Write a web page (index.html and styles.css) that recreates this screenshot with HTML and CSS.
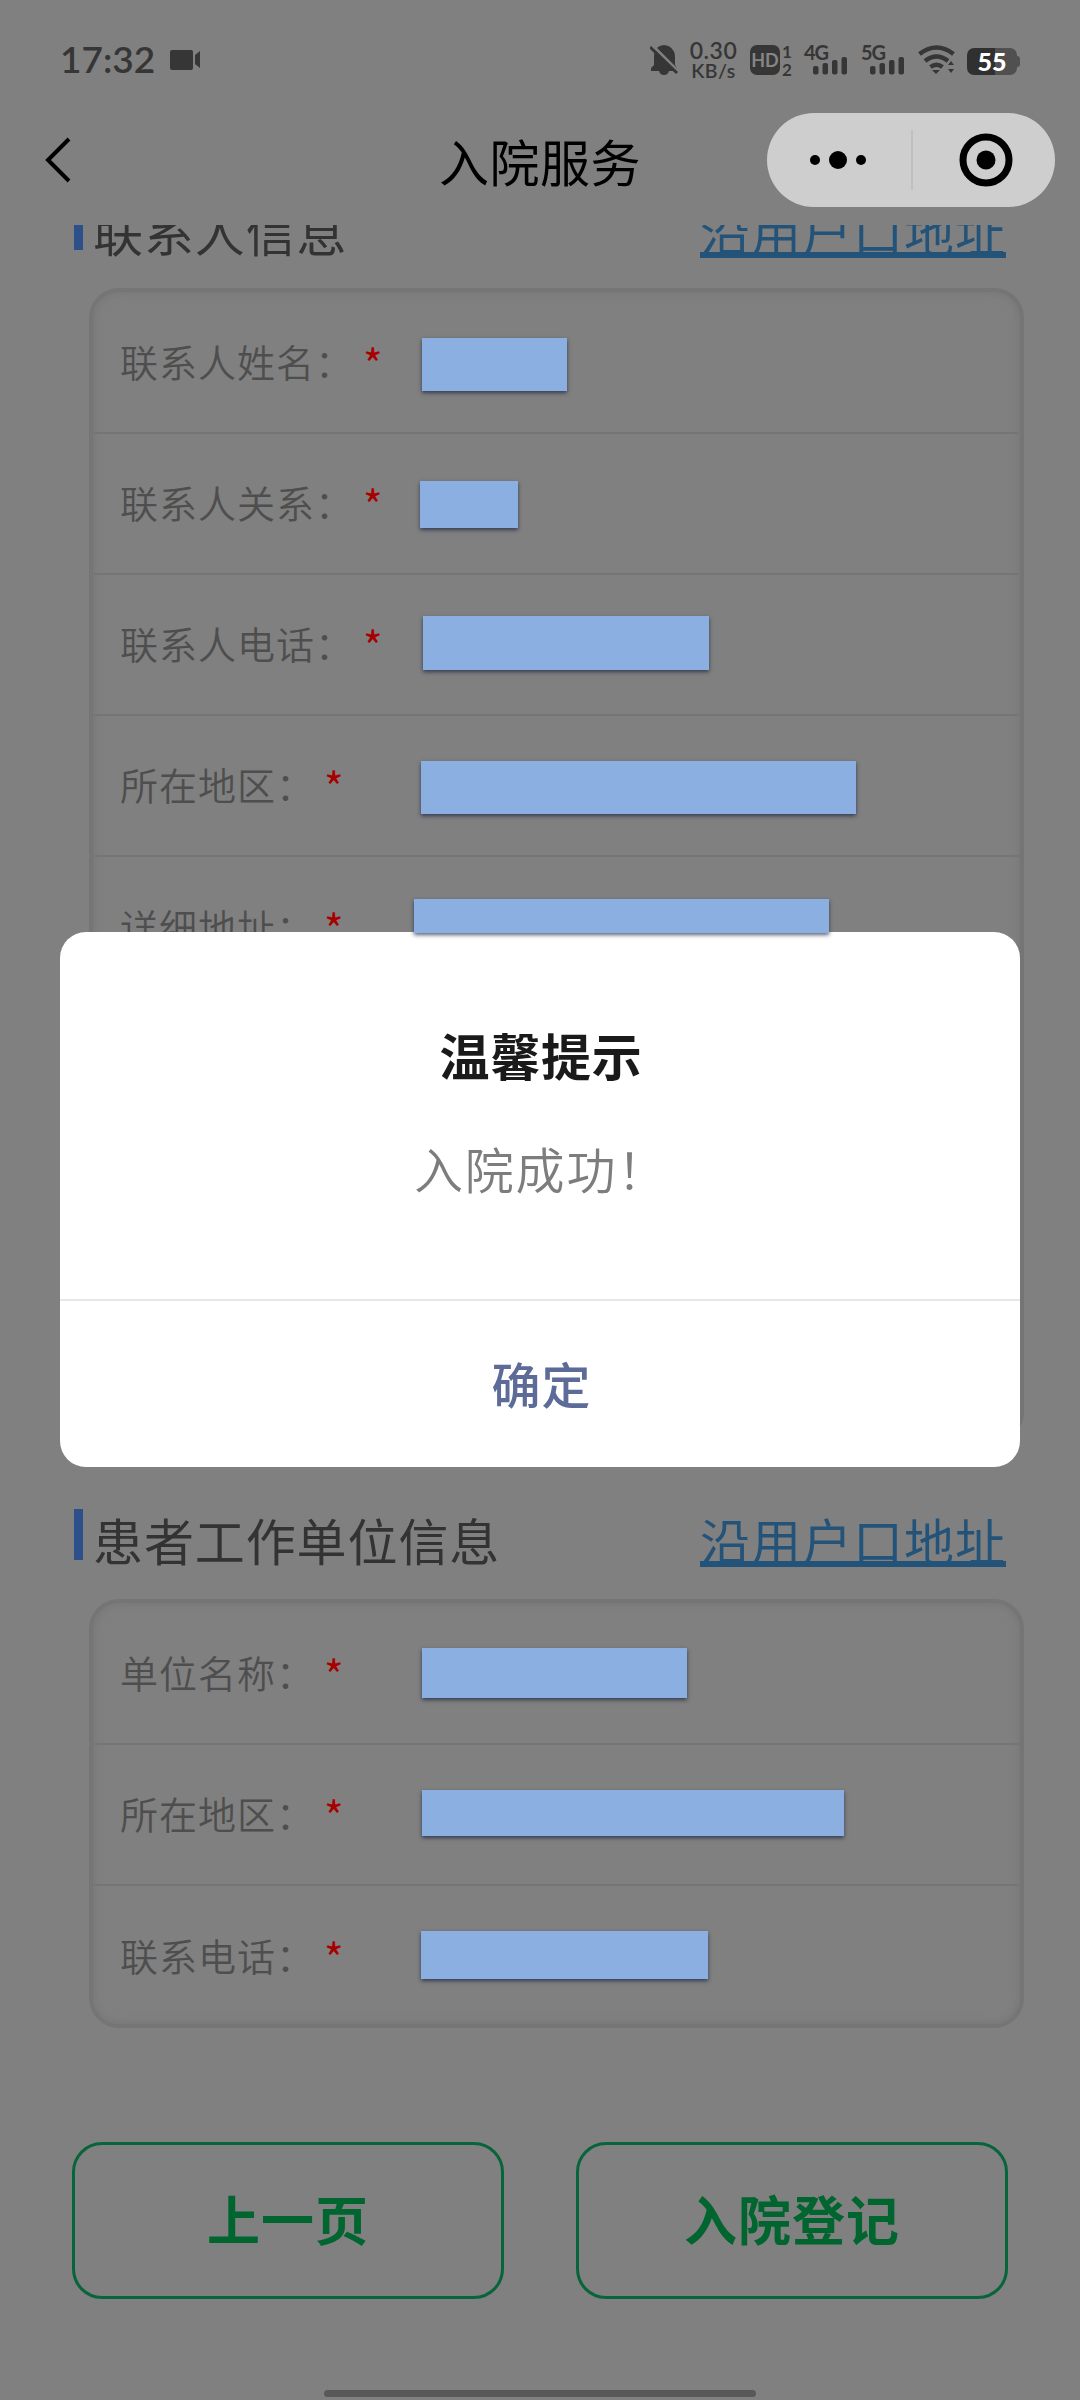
FILE: index.html
```html
<!DOCTYPE html>
<html lang="zh-CN">
<head>
<meta charset="utf-8">
<title>入院服务</title>
<link rel="stylesheet" href="styles.css">
</head>
<body>
<div class="phone">
  <header class="status">
    <span class="clock">17:32</span>
    <svg class="camera" width="31" height="20" viewBox="0 0 31 20"><rect width="23" height="20" rx="2"/><path d="M25 5l5-4v17l-5-4z"/></svg>
    <div class="status-right">
      <svg class="bell" width="28" height="30" viewBox="0 0 28 30"><path d="M14 0q10 1 11 11v9l2 3v3H1v-3l3-3v-9Q4 1 14 0zM9 26h10q-1 4-5 4t-5-4z"/><path class="cut" d="M3 1l26 26"/><path class="slash" d="M0 2l27 26"/></svg>
      <div class="rate"><span>0.30</span><span class="unit">KB/s</span></div>
      <div class="volte"><b class="hd">HD</b><div class="sims"><span>1</span><span>2</span></div></div>
      <div class="signal"><span>4G</span><svg width="34" height="18" viewBox="0 0 34 18"><rect y="9" width="5.5" height="8.500" rx="2"/><rect x="9.500" y="6" width="5.500" height="11.500" rx="2"/><rect x="19" y="3" width="5.500" height="14.500" rx="2"/><rect x="28.500" width="5.500" height="17.500" rx="2"/></svg></div>
      <div class="signal"><span>5G</span><svg width="34" height="18" viewBox="0 0 34 18"><rect y="9" width="5.5" height="8.500" rx="2"/><rect x="9.500" y="6" width="5.500" height="11.500" rx="2"/><rect x="19" y="3" width="5.500" height="14.500" rx="2"/><rect x="28.500" width="5.500" height="17.500" rx="2"/></svg></div>
      <svg class="wifi" width="38" height="29" viewBox="0 0 38 29"><path class="arc" d="M1.500 9q17-13 34 0M7 16q11.500-9 23 0M12.500 22q6-4.500 12 0"/><path d="M14 25h8l-4 4zM30 20l3-4 3 4zM30 24h6l-3 4z"/></svg>
      <div class="battery"><span>55</span></div>
    </div>
  </header>
  <nav class="nav">
    <svg class="back" width="26" height="46" viewBox="0 0 26 46"><path d="M24 2L3 23l21 21"/></svg>
    <h1>入院服务</h1>
    <div class="capsule">
      <svg width="56" height="20" viewBox="0 0 56 20"><circle cx="5" cy="10" r="5"/><circle cx="28" cy="10" r="9"/><circle cx="51" cy="10" r="5"/></svg>
      <i class="split"></i>
      <svg width="54" height="54" viewBox="0 0 54 54"><circle class="ring" cx="27" cy="27" r="23"/><circle cx="27" cy="27" r="9.500"/></svg>
    </div>
  </nav>
  <main class="page">
    <section class="block contact">
      <div class="heading"><i class="mark"></i><h2>联系人信息</h2><a>沿用户口地址</a></div>
      <div class="card">
        <div class="row"><label>联系人姓名：</label><em>*</em><i class="mask m1"></i></div>
        <div class="row"><label>联系人关系：</label><em>*</em><i class="mask m2"></i></div>
        <div class="row"><label>联系人电话：</label><em>*</em><i class="mask m3"></i></div>
        <div class="row"><label>所在地区：</label><em>*</em><i class="mask m4"></i></div>
        <div class="row"><label>详细地址：</label><em>*</em></div>
      </div>
    </section>
    <section class="block work">
      <div class="heading"><i class="mark"></i><h2>患者工作单位信息</h2><a>沿用户口地址</a></div>
      <div class="card">
        <div class="row"><label>单位名称：</label><em>*</em><i class="mask m6"></i></div>
        <div class="row"><label>所在地区：</label><em>*</em><i class="mask m7"></i></div>
        <div class="row"><label>联系电话：</label><em>*</em><i class="mask m8"></i></div>
      </div>
    </section>
    <div class="actions"><button>上一页</button><button>入院登记</button></div>
    <i class="home"></i>
  </main>
  <div class="dialog">
    <i class="mask m5"></i>
    <div class="body"><h3>温馨提示</h3><p>入院成功！</p></div>
    <button class="ok">确定</button>
  </div>
</div>
</body>
</html>
```
FILE: styles.css
```css
* { box-sizing: border-box; margin: 0; padding: 0; }
body { background: #808080; font-family: "Noto Sans CJK SC", sans-serif; }
svg, i { display: block; flex: none; }
.phone { position: relative; width: 1080px; height: 2400px; overflow: hidden; display: flex; flex-direction: column; }

.status { height: 96px; flex: none; display: flex; align-items: flex-start; padding: 0 60px; color: #363636; fill: #363636; font-family: Lato, sans-serif; }
.clock { width: 110px; padding-top: 37px; font-size: 37px; line-height: 44px; font-weight: 600; letter-spacing: 0; white-space: nowrap; }
.camera { margin-top: 50px; }
.status-right { margin-left: auto; display: flex; align-items: flex-start; }
.bell { margin: 45px 12px 0 0; }
.bell path { fill: #363636; }
.bell .cut { stroke: #808080; stroke-width: 3; fill: none; }
.bell .slash { stroke: #363636; stroke-width: 3; fill: none; }
.rate { width: 47px; margin: 40px 13px 0 0; display: flex; flex-direction: column; align-items: center; font-size: 23px; line-height: 21px; font-weight: 600; letter-spacing: .5px; white-space: nowrap; }
.rate .unit { font-size: 19.5px; line-height: 20px; }
.volte { display: flex; width: 54px; margin-top: 45px; }
.hd { width: 30px; height: 30px; border-radius: 7px; background: #363636; color: #858585; font-size: 18px; line-height: 30px; text-align: center; }
.sims { display: flex; flex-direction: column; align-items: center; width: 14px; font-size: 17px; line-height: 13px; font-weight: 700; gap: 5px; }
.signal { width: 44px; margin: 43px 13px 0 0; display: flex; flex-direction: column; font-size: 20px; line-height: 19px; font-weight: 700; letter-spacing: -1px; }
.signal svg { margin: -5px 0 0 9px; }
.wifi { margin: 45px 11px 0 0; }
.wifi .arc { fill: none; stroke: #363636; stroke-width: 4.5; }
.battery { position: relative; width: 50px; height: 27px; margin: 48px 3px 0 0; border-radius: 7px; background: linear-gradient(90deg, #303030 56%, #505050 56%); color: #fff; font-size: 25px; line-height: 27px; font-weight: 900; text-align: center; }
.battery::after { content: ""; position: absolute; left: 50px; top: 8px; width: 3px; height: 11px; border-radius: 0 4px 4px 0; background: #505050; }

.nav { height: 129px; flex: none; display: grid; grid-template-columns: 1fr auto 1fr; align-items: center; padding: 0 25px 1px; }
.nav h1 { font-size: 50px; line-height: 60px; font-weight: 400; letter-spacing: .5px; color: #000; padding-bottom: 1px; }
.back { margin-left: 20px; }
.back path { fill: none; stroke: #000; stroke-width: 4; }
.capsule { justify-self: end; width: 288px; height: 94px; border-radius: 47px; background: #cecece; display: flex; align-items: center; padding: 0 42px 0 43px; }
.split { width: 2px; height: 60px; margin: 0 46px 0 45px; background: #c0c0c0; }
.ring { fill: none; stroke: #000; stroke-width: 7; }

.page { flex: 1; overflow: hidden; display: flex; flex-direction: column; }
.contact { height: 1310px; margin-top: -26px; }
.block { flex: none; }
.heading { height: 89px; padding: 0 74px; display: flex; align-items: flex-start; }
.work .heading { height: 90px; }
.mark { width: 9px; height: 51px; background: #2d508a; }
.heading h2 { margin: -6px 0 0 10px; font-size: 50px; line-height: 74px; font-weight: 400; letter-spacing: .9px; color: #333; }
.heading a { margin: -6px 0 0 auto; font-size: 50px; line-height: 74px; letter-spacing: 1px; color: #235379; text-decoration: underline; text-decoration-thickness: 6px; text-underline-offset: 0px; text-decoration-skip-ink: none; }
.work h2, .work .heading a { margin-top: -7px; }
.card { width: 935px; margin-left: 89px; border: 4px solid #757575; border-radius: 30px; box-shadow: inset 0 0 10px #747474; padding: 1px; }
.row { height: 141px; display: flex; align-items: center; border-bottom: 2px solid #757575; padding-left: 26px; position: relative; }
.row:last-child { border-bottom: 0; }
.row label { font-size: 38px; line-height: 56px; letter-spacing: 1px; color: #4e4e4e; font-weight: 350; white-space: nowrap; padding-bottom: 3px; }
.row em { font-style: normal; font-size: 42px; line-height: 40px; margin: 0 0 0 9px; color: #a80000; }
.mask { position: absolute; z-index: 5; background: #8cafe2; box-shadow: 0 2px 4px rgba(20, 30, 60, .7); }
.m1 { left: 328px; top: 45px; width: 145px; height: 53px; }
.m2 { left: 326px; top: 47px; width: 98px; height: 47px; }
.m3 { left: 329px; top: 41px; width: 286px; height: 54px; }
.m4 { left: 327px; top: 45px; width: 435px; height: 53px; }
.m5 { left: 354px; top: -33px; width: 415px; height: 34px; }
.m6 { left: 328px; top: 44px; width: 265px; height: 50px; }
.m7 { left: 328px; top: 45px; width: 422px; height: 46px; }
.m8 { left: 327px; top: 45px; width: 287px; height: 48px; }
.contact .card { height: 1154px; }
.work .card { height: 429px; }

.actions { display: flex; gap: 72px; padding: 0 72px; margin-top: 114px; }
.actions button { flex: 1; height: 157px; background: none; border: 3px solid #08643a; border-radius: 30px; font: 700 53px/78px "Noto Sans CJK SC", sans-serif; letter-spacing: 1px; color: #00652f; padding-bottom: 5px; }
.home { width: 432px; height: 7px; border-radius: 4px; background: #585858; margin: 91px auto 0; }

.dialog { position: absolute; z-index: 2; left: 60px; top: 932px; width: 960px; height: 535px; border-radius: 26px; background: #fff; display: flex; flex-direction: column; text-align: center; }
.body { height: 369px; border-bottom: 2px solid #e7e7e7; padding-top: 85px; }
.body h3 { font-size: 50px; line-height: 74px; font-weight: 700; letter-spacing: .8px; color: #1a1a1a; padding-left: 2px; }
.body p { font-size: 49px; line-height: 72px; letter-spacing: 1.800px; color: #7d7d7d; margin-top: 41px; font-weight: 350; padding-left: 2px; }
.ok { flex: 1; border: 0; background: none; font: 500 49px/72px "Noto Sans CJK SC", sans-serif; letter-spacing: 1px; color: #5d6b98; padding: 0 0 3px 3px; }
```
